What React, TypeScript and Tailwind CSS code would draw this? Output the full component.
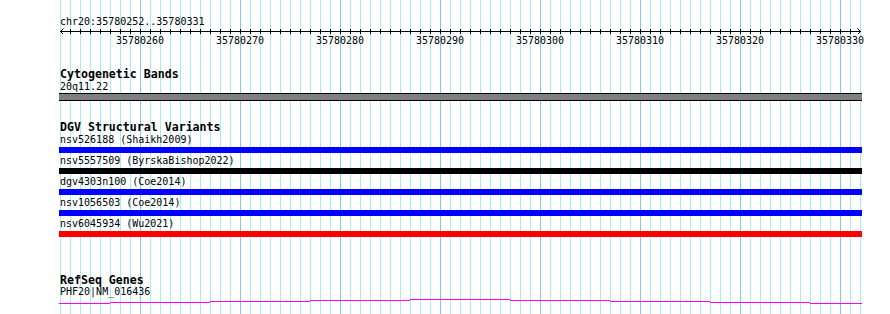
import React from "react";

const minor: number[] = [];
for (let x = 60; x <= 860; x += 10) minor.push(x);
const labels = [35780260, 35780270, 35780280, 35780290, 35780300, 35780310, 35780320, 35780330];

const variants = [
  { label: "nsv526188 (Shaikh2009)", color: "bg-[#0000ff]" },
  { label: "nsv5557509 (ByrskaBishop2022)", color: "bg-black" },
  { label: "dgv4303n100 (Coe2014)", color: "bg-[#0000ff]" },
  { label: "nsv1056503 (Coe2014)", color: "bg-[#0000ff]" },
  { label: "nsv6045934 (Wu2021)", color: "bg-[#ff0000]" },
];

const segs: [number, number, number][] = [
  [59, 110, 5],
  [110, 210, 4],
  [210, 310, 3],
  [310, 410, 2],
  [410, 510, 1],
  [510, 610, 2],
  [610, 710, 3],
  [710, 810, 4],
  [810, 862, 5],
];

const txt = "font-['DejaVu_Sans_Mono','Liberation_Mono',monospace] text-[10px] leading-[13px] h-[13px] text-black whitespace-pre";
const ttl = "font-['DejaVu_Sans_Mono','Liberation_Mono',monospace] font-bold text-[11.6px] leading-[12px] h-[12px] text-black whitespace-pre";

export default function App() {
  return (
    <div className="relative w-[890px] h-[314px] bg-white overflow-hidden">
      <svg className="absolute inset-0" width={890} height={314} shapeRendering="crispEdges">
        {minor.map((x) => (
          <line
            key={x}
            x1={x + 0.5}
            x2={x + 0.5}
            y1={0}
            y2={314}
            stroke={(x - 40) % 100 === 0 ? "#80c8f0" : "#a8ecf0"}
            strokeWidth={1}
          />
        ))}
      </svg>
      <div className="relative flex flex-col pt-[15px]">
        <div className={`${txt} pl-[60px]`}>chr20:35780252..35780331</div>
        <svg width={890} height={6} className="block" shapeRendering="crispEdges">
          <line x1={60} x2={861} y1={3.5} y2={3.5} stroke="#000" />
          {minor
            .filter((x) => x > 60 && x < 860)
            .map((x) => (
              <line key={x} x1={x + 0.5} x2={x + 0.5} y1={1} y2={6} stroke="#000" />
            ))}
          <polyline points="63.5,0.5 60.5,3.5 63.5,6.5" fill="none" stroke="#000" shapeRendering="auto" />
          <polyline points="857.5,0.5 860.5,3.5 857.5,6.5" fill="none" stroke="#000" shapeRendering="auto" />
        </svg>
        <div className="flex pl-[90px]">
          {labels.map((l) => (
            <div key={l} className={`${txt} w-[100px] text-center`}>
              {l}
            </div>
          ))}
        </div>

        <div className={`${ttl} pl-[60px] mt-[21px]`}>Cytogenetic Bands</div>
        <div className={`${txt} pl-[60px]`}>20q11.22</div>
        <div className="ml-[59px] w-[803px] h-[8px] bg-[#808080] border-y border-black" />

        <div className={`${ttl} pl-[60px] mt-[20px]`}>DGV Structural Variants</div>
        {variants.map((v) => (
          <div key={v.label} className="flex flex-col pb-[1px]">
            <div className={`${txt} pl-[60px]`}>{v.label}</div>
            <div className={`ml-[59px] mt-[1px] w-[803px] h-[6px] ${v.color}`} />
          </div>
        ))}

        <div className={`${ttl} pl-[60px] mt-[36px]`}>RefSeq Genes</div>
        <div className={`${txt} pl-[60px] mt-[-1px]`}>PHF20|NM_016436</div>
        <svg width={890} height={8} className="block" shapeRendering="crispEdges">
          {segs.map(([a, b, y]) => (
            <rect key={a} x={a} y={y} width={b - a} height={1} fill="#ff00ff" />
          ))}
        </svg>
      </div>
    </div>
  );
}
